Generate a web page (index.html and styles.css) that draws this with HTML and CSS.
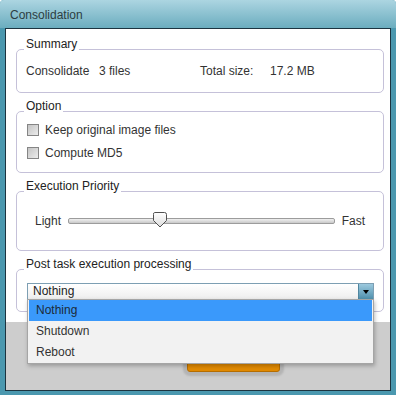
FILE: index.html
```html
<!DOCTYPE html>
<html lang="en">
  <head>
    <meta charset="UTF-8" />
    <title>Consolidation</title>
    <link rel="stylesheet" href="styles.css">
  </head>
  <body>
    <div class="window">
      <div class="titlebar">Consolidation</div>
      <div class="client">
        <div class="content">
          <section class="group summary">
            <h3 class="group-title">Summary</h3>
            <div class="summary-row">
              <span>Consolidate</span>
              <span>3 files</span>
              <span>Total size:</span>
              <span>17.2 MB</span>
            </div>
          </section>
          <section class="group options">
            <h3 class="group-title">Option</h3>
            <label class="check"><span class="box"></span>Keep original image files</label>
            <label class="check"><span class="box"></span>Compute MD5</label>
          </section>
          <section class="group priority">
            <h3 class="group-title">Execution Priority</h3>
            <div class="slider-row">
              <span>Light</span>
              <div class="track">
                <svg class="thumb" width="16" height="16" viewBox="0 0 16 16">
                  <defs>
                    <linearGradient id="tg" x1="0" y1="0" x2="0" y2="1">
                      <stop offset="0" stop-color="#ffffff" />
                      <stop offset="1" stop-color="#dcdcdc" />
                    </linearGradient>
                  </defs>
                  <path d="M2.5 0.5 H12.5 Q14.5 0.5 14.5 2.5 V8.5 L8 15 L1.5 8.5 V2.5 Q1.5 0.5 2.5 0.5 Z" fill="url(#tg)" stroke="#505050" stroke-width="1" />
                </svg>
              </div>
              <span>Fast</span>
            </div>
          </section>
          <section class="group post">
            <h3 class="group-title">Post task execution processing</h3>
            <div class="combo">
              <span class="combo-value">Nothing</span>
              <span class="combo-arrow"></span>
              <ul class="combo-list">
                <li class="selected">Nothing</li>
                <li>Shutdown</li>
                <li>Reboot</li>
              </ul>
            </div>
          </section>
        </div>
        <div class="footer">
          <button class="ok" type="button"></button>
        </div>
      </div>
    </div>
  </body>
</html>
```

FILE: styles.css
```css
body {
  margin: 0;
  font-family: "Liberation Sans", Arial, sans-serif;
  font-size: 12px;
  line-height: 14px;
  color: #333;
}
.window {
  width: 396px;
  height: 395px;
  box-sizing: border-box;
  padding: 0 5px 4px;
  background-color: #4b98af;
  border-radius: 4px 4px 0 0;
  display: flex;
  flex-direction: column;
}
.titlebar {
  height: 28px;
  margin: 0 -5px;
  padding-left: 10px;
  line-height: 30px;
  color: #2d3d42;
  background: linear-gradient(#acd5e1, #6badbf);
  border-radius: 4px 4px 0 0;
}
.client {
  flex: 1;
  border: 1px solid #1c3440;
  background-color: #fff;
  display: flex;
  flex-direction: column;
}
.content {
  flex: 1;
  padding: 20px 6px 0 10px;
  display: flex;
  flex-direction: column;
  gap: 18px;
}
.group {
  position: relative;
  border: 1px solid #c5c1d9;
  border-radius: 5px;
  padding: 0 10px;
}
.group-title {
  position: absolute;
  top: -13px;
  left: 7px;
  margin: 0;
  padding: 0 2px;
  background-color: #fff;
  font-size: 12px;
  font-weight: normal;
  line-height: 14px;
  color: #222;
}
.summary {
  padding: 14px 9px;
}
.summary-row {
  display: grid;
  grid-template-columns: 73px 101px 70px auto;
}
.options {
  padding-top: 8px;
  padding-bottom: 9px;
  display: flex;
  flex-direction: column;
  gap: 3px;
}
.check {
  height: 20px;
  display: flex;
  align-items: center;
  gap: 6px;
}
.box {
  width: 10px;
  height: 10px;
  border: 1px solid #858585;
  background: linear-gradient(135deg, #c4c4c4, #ececec);
}
.priority {
  padding: 21px 18px 21px 18px;
}
.slider-row {
  height: 16px;
  display: flex;
  align-items: center;
  gap: 7px;
}
.track {
  position: relative;
  flex: 1;
  height: 4px;
  border: 1px solid #9c9c9c;
  border-radius: 2px;
  background: linear-gradient(#f0f0f0, #c9c9c9);
}
.thumb {
  position: absolute;
  left: 83px;
  top: -7px;
}
.post {
  padding: 13px 9px 11px 10px;
}
.combo {
  position: relative;
  height: 15px;
  border: 1px solid #7d9fb3;
  background: linear-gradient(#fff, #eeeeee);
  display: flex;
}
.combo-value {
  flex: 1;
  padding-left: 5px;
  line-height: 15px;
  color: #222;
}
.combo-arrow {
  width: 14px;
  border-left: 1px solid #4f86a0;
  background: linear-gradient(#9cc9de, #4f90ad);
  position: relative;
}
.combo-arrow::after {
  content: "";
  position: absolute;
  left: 4px;
  top: 6px;
  border-left: 3.5px solid transparent;
  border-right: 3.5px solid transparent;
  border-top: 4px solid #000;
}
.combo-list {
  position: absolute;
  top: 100%;
  left: -1px;
  width: calc(100% + 2px);
  box-sizing: border-box;
  margin: 0;
  padding: 0 1px;
  list-style: none;
  border: 1px solid #a5a5a5;
  background-color: #f2f2f2;
  box-shadow: 1px 2px 4px rgba(0, 0, 0, 0.25);
  z-index: 2;
}
.combo-list li {
  height: 21px;
  line-height: 21px;
  padding-left: 7px;
  color: #333;
}
.combo-list .selected {
  background-color: #3a99fb;
  color: #1c2a38;
}
.footer {
  height: 68px;
  background-color: #cdcdcd;
  padding: 22px 0 0 181px;
  box-sizing: border-box;
}
.ok {
  width: 93px;
  height: 28px;
  border: 1px solid #b56d00;
  border-radius: 3px;
  background-color: #e28a00;
  box-shadow: 0 0 2px 4px #b4b4b4;
}
```
